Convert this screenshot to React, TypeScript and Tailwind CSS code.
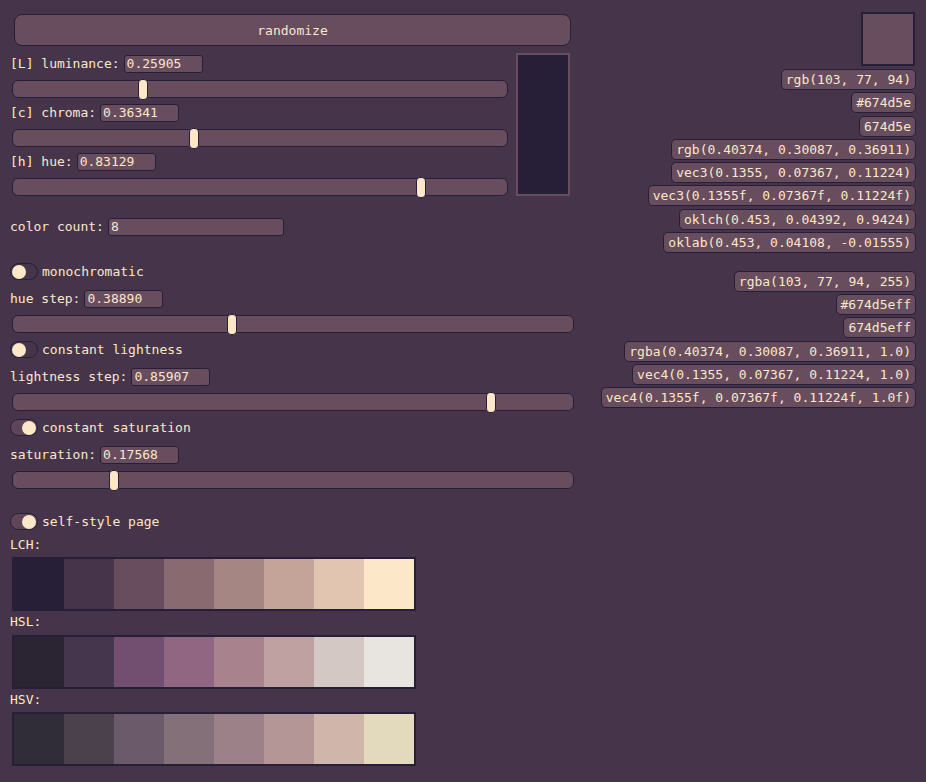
const BG = 'bg-[#46354a]'

const LCH = ['#271f37', '#46354a', '#674d5e', '#886a70', '#a68682', '#c4a498', '#e1c5b0', '#fce7c9']
const HSL = ['#2a2433', '#45364d', '#724f71', '#916683', '#a8828d', '#bfa1a2', '#d3c8c4', '#e8e5e0']
const HSV = ['#312d38', '#4a414d', '#6b5a6a', '#837079', '#9d8188', '#b59696', '#d0b6aa', '#e3d9bd']

const FORMATS_A = [
  'rgb(103, 77, 94)',
  '#674d5e',
  '674d5e',
  'rgb(0.40374, 0.30087, 0.36911)',
  'vec3(0.1355, 0.07367, 0.11224)',
  'vec3(0.1355f, 0.07367f, 0.11224f)',
  'oklch(0.453, 0.04392, 0.9424)',
  'oklab(0.453, 0.04108, -0.01555)',
]

const FORMATS_B = [
  'rgba(103, 77, 94, 255)',
  '#674d5eff',
  '674d5eff',
  'rgba(0.40374, 0.30087, 0.36911, 1.0)',
  'vec4(0.1355, 0.07367, 0.11224, 1.0)',
  'vec4(0.1355f, 0.07367f, 0.11224f, 1.0f)',
]

function NumberField({ label, value, wide }: { label: string; value: string; wide?: boolean }) {
  return (
    <div className="flex items-center h-[18px] gap-[4px]">
      <span className="leading-[18px]">{label}</span>
      <div
        className={`h-[18px] ${wide ? 'w-[176px]' : 'w-[79px]'} bg-[#674d5e] border border-[#271f37] rounded-[3px] pl-[2px] leading-[16px]`}
      >
        {value}
      </div>
    </div>
  )
}

function Slider({ value, width }: { value: number; width: number }) {
  const thumbLeft = value * (width - 10)
  return (
    <div
      className="relative ml-[2px] h-[18px] bg-[#674d5e] border border-[#271f37] rounded-[6px]"
      style={{ width }}
    >
      <div
        className="absolute top-[-2px] h-[21px] w-[10px] bg-[#fce7c9] border border-[#271f37] rounded-[4px]"
        style={{ left: thumbLeft - 1 }}
      />
    </div>
  )
}

function Toggle({ label, on }: { label: string; on?: boolean }) {
  return (
    <div className="flex items-center gap-[4px] h-[17px]">
      <div
        className={`w-[28px] h-[17px] rounded-full border border-[#271f37] flex items-center px-[1px] ${
          on ? 'bg-[#5f4558] justify-end' : 'bg-[#46354a] justify-start'
        }`}
      >
        <div className="w-[14px] h-[14px] rounded-full bg-[#fce7c9]" />
      </div>
      <span className="leading-[17px]">{label}</span>
    </div>
  )
}

function Palette({ colors }: { colors: string[] }) {
  return (
    <div className="ml-[2px] w-[404px] border-2 border-[#271f37] flex">
      {colors.map((c) => (
        <div key={c} className="w-[50px] h-[50px]" style={{ background: c }} />
      ))}
    </div>
  )
}

function Pill({ text }: { text: string }) {
  return (
    <div className="h-[21px] px-[4px] bg-[#674d5e] border border-[#271f37] rounded-[5px] leading-[19px] whitespace-pre">
      {text}
    </div>
  )
}

export default function App() {
  return (
    <div
      className={`${BG} w-[926px] h-[782px] text-[#fce7c9] text-[13px] flex overflow-hidden`}
      style={{ fontFamily: '"DejaVu Sans Mono", "Liberation Mono", monospace' }}
    >
      <div className="w-[574px] shrink-0 pl-[10px] flex flex-col">
        <button className="mt-[14px] ml-[4px] w-[557px] h-[32px] pt-[1px] bg-[#674d5e] border border-[#271f37] rounded-[8px] text-[#fce7c9]">
          randomize
        </button>

        <div className="mt-[7px] flex gap-[8px]">
          <div className="w-[498px] flex flex-col">
            <div className="mt-[2px]">
              <NumberField label="[L] luminance:" value="0.25905" />
            </div>
            <div className="mt-[7px]">
              <Slider value={0.25905} width={496} />
            </div>
            <div className="mt-[6px]">
              <NumberField label="[c] chroma:" value="0.36341" />
            </div>
            <div className="mt-[7px]">
              <Slider value={0.36341} width={496} />
            </div>
            <div className="mt-[6px]">
              <NumberField label="[h] hue:" value="0.83129" />
            </div>
            <div className="mt-[7px]">
              <Slider value={0.83129} width={496} />
            </div>
          </div>
          <div className="w-[54px] h-[143px] border-2 border-[#674d5e] bg-[#271f37]" />
        </div>

        <div className="mt-[22px]">
          <NumberField label="color count:" value="8" wide />
        </div>

        <div className="mt-[27px]">
          <Toggle label="monochromatic" />
        </div>
        <div className="mt-[10px]">
          <NumberField label="hue step:" value="0.38890" />
        </div>
        <div className="mt-[7px]">
          <Slider value={0.3889} width={562} />
        </div>

        <div className="mt-[8px]">
          <Toggle label="constant lightness" />
        </div>
        <div className="mt-[10px]">
          <NumberField label="lightness step:" value="0.85907" />
        </div>
        <div className="mt-[7px]">
          <Slider value={0.85907} width={562} />
        </div>

        <div className="mt-[8px]">
          <Toggle label="constant saturation" on />
        </div>
        <div className="mt-[10px]">
          <NumberField label="saturation:" value="0.17568" />
        </div>
        <div className="mt-[7px]">
          <Slider value={0.17568} width={562} />
        </div>

        <div className="mt-[24px]">
          <Toggle label="self-style page" on />
        </div>

        <div className="mt-[7px] leading-[16px]">LCH:</div>
        <div className="mt-[4px]">
          <Palette colors={LCH} />
        </div>
        <div className="mt-[3px] leading-[16px]">HSL:</div>
        <div className="mt-[5px]">
          <Palette colors={HSL} />
        </div>
        <div className="mt-[3px] leading-[16px]">HSV:</div>
        <div className="mt-[4px]">
          <Palette colors={HSV} />
        </div>
      </div>

      <div className="flex-1 pr-[10px] flex flex-col items-end">
        <div className="mt-[12px] mr-[1px] w-[54px] h-[54px] border-2 border-[#271f37] bg-[#674d5e]" />
        <div className="mt-[3px] flex flex-col items-end gap-[2.3px]">
          {FORMATS_A.map((f) => (
            <Pill key={f} text={f} />
          ))}
        </div>
        <div className="mt-[18px] flex flex-col items-end gap-[2.2px]">
          {FORMATS_B.map((f) => (
            <Pill key={f} text={f} />
          ))}
        </div>
      </div>
    </div>
  )
}
